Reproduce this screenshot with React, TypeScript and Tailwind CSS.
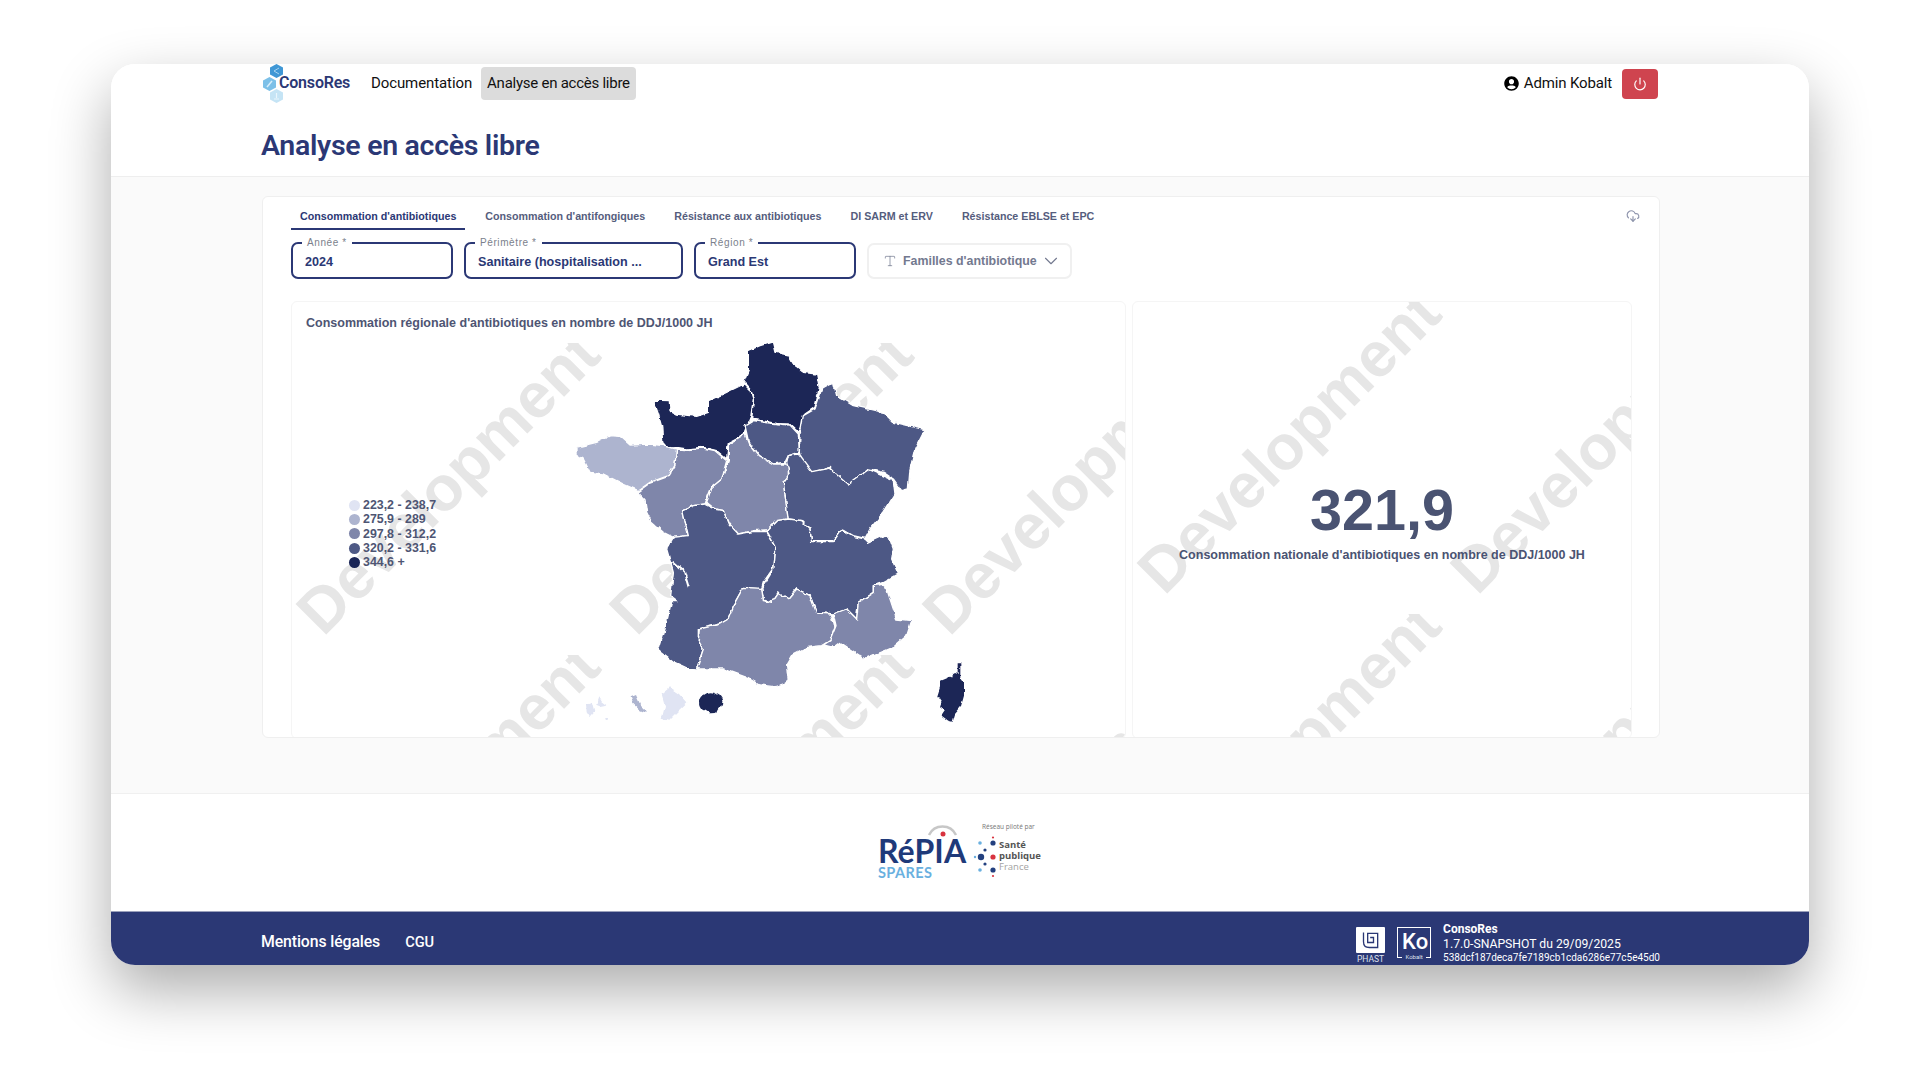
import { ChevronDown, CloudDownload, Power, Type } from "lucide-react";
import { FaUserCircle } from "react-icons/fa";

const SANS = "font-['Liberation_Sans',Arial,sans-serif]";
const UI = "font-['Roboto',sans-serif]";

const C1 = "#e0e4f3";
const C2 = "#adb4cf";
const C3 = "#7f86aa";
const C4 = "#4e5985";
const C5 = "#1a2556";

const REGIONS: { name: string; fill: string; d: string }[] = [
  { name: "hdf", fill: C5, d: "625,95 660,80 700,68 708,100 745,108 760,135 790,160 830,165 838,205 825,265 795,285 785,325 775,340 748,315 715,315 665,305 635,300 640,240 632,210 612,188 625,155" },
  { name: "nor", fill: C5, d: "340,243 388,245 390,275 408,285 470,292 505,280 505,245 550,225 612,195 632,215 640,240 632,295 612,345 565,370 560,420 530,395 490,385 440,390 410,385 385,390 368,370 365,320 355,285" },
  { name: "idf", fill: C4, d: "615,320 640,305 690,312 750,318 775,345 778,400 745,410 735,430 700,435 655,410 625,365" },
  { name: "ges", fill: C4, d: "845,210 880,190 890,230 940,260 1030,280 1060,310 1155,332 1125,390 1110,450 1105,510 1085,515 1060,480 1030,460 985,450 955,490 925,498 895,470 870,445 815,460 785,425 778,400 780,345 790,290 825,270" },
  { name: "cvl", fill: C3, d: "615,345 625,370 655,410 700,435 745,435 745,470 730,490 745,600 710,605 680,632 640,635 595,645 565,610 550,575 525,570 500,550 515,505 545,480 565,425 565,375" },
  { name: "bfc", fill: C4, d: "745,410 775,405 815,458 870,447 925,495 985,452 1060,485 1065,525 1030,580 990,630 975,658 940,650 905,630 880,665 815,665 810,630 785,605 745,600 730,490 748,465 740,430" },
  { name: "bre", fill: C2, d: "108,385 170,370 210,350 240,352 270,378 330,375 370,380 410,390 405,440 385,470 330,490 295,515 250,495 190,465 150,460 130,420 108,405" },
  { name: "pdl", fill: C3, d: "410,390 440,392 490,387 525,395 560,425 545,480 515,505 495,555 460,560 428,575 445,650 400,655 370,640 335,610 320,580 315,545 290,520 330,492 385,472 405,440" },
  { name: "naq", fill: C4, d: "428,575 460,560 495,555 530,572 550,575 565,612 595,645 640,637 680,638 705,680 698,750 670,790 665,810 610,805 585,850 565,900 540,915 475,930 475,965 490,990 470,1050 440,1048 400,1030 355,995 375,930 395,845 412,845 392,830 400,760 380,690 400,655 445,650" },
  { name: "ara", fill: C4, d: "680,635 710,605 745,600 785,605 810,632 815,668 880,668 905,632 940,652 975,660 985,670 1030,650 1045,648 1060,690 1055,720 1075,765 1030,790 1000,800 1000,820 955,850 950,900 920,870 880,885 830,880 810,830 770,810 745,840 715,820 695,850 670,840 665,808 698,755 705,680" },
  { name: "occ", fill: C3, d: "610,805 665,808 670,845 695,850 715,820 745,840 770,810 810,830 830,882 875,885 885,925 870,965 845,980 800,985 760,1005 740,1040 745,1090 705,1103 660,1098 620,1075 550,1050 470,1050 490,990 475,965 478,930 540,915 565,900 585,850" },
  { name: "pac", fill: C3, d: "1000,800 1035,795 1050,840 1070,900 1115,905 1100,950 1060,985 1010,1005 975,1020 930,990 900,970 880,985 850,978 870,965 888,920 880,885 920,870 950,900 955,850 1000,820" },
];

const OUTRE_MER: { fill: string; d: string }[] = [
  { fill: C5, d: "1253,1030 1261,1030 1261,1075 1272,1090 1272,1130 1262,1165 1245,1185 1238,1208 1225,1205 1205,1190 1215,1175 1200,1165 1205,1150 1192,1130 1200,1105 1200,1085 1225,1075 1245,1062 1253,1065" },
  { fill: C1, d: "138,1155 155,1150 163,1180 150,1195 140,1180" },
  { fill: C1, d: "168,1160 178,1132 188,1150 202,1160 180,1165" },
  { fill: C2, d: "272,1135 288,1128 300,1155 318,1172 320,1182 298,1172 280,1155" },
  { fill: C1, d: "365,1125 390,1105 420,1125 442,1150 410,1180 385,1205 365,1200 375,1160" },
];

const LEGEND = [
  { color: C1, label: "223,2 - 238,7" },
  { color: C2, label: "275,9 - 289" },
  { color: C3, label: "297,8 - 312,2" },
  { color: C4, label: "320,2 - 331,6" },
  { color: C5, label: "344,6 +" },
];

const TABS = [
  { label: "Consommation d'antibiotiques", active: true },
  { label: "Consommation d'antifongiques" },
  { label: "Résistance aux antibiotiques" },
  { label: "DI SARM et ERV" },
  { label: "Résistance EBLSE et EPC" },
];

function Watermark() {
  return (
    <div className="absolute inset-0 overflow-hidden grid grid-cols-[repeat(4,313px)] auto-rows-[312px]">
      {Array.from({ length: 12 }).map((_, i) => (
        <div key={i} className="overflow-hidden flex items-center justify-center">
          <span className={`${SANS} -rotate-45 whitespace-nowrap text-[63px] font-bold text-[#e6e6e6] -translate-x-[1px] -translate-y-[17px]`}>
            Development
          </span>
        </div>
      ))}
    </div>
  );
}

function Field({ label, value, width }: { label: string; value: string; width: string }) {
  return (
    <fieldset className={`${width} h-[41px] -mt-[6px] rounded-[7px] border-2 border-[#2b3875] px-[12px] ${SANS}`}>
      <legend className="ml-[-3px] px-[5px] text-[10px] leading-[10px] tracking-[0.6px] text-[#7b7f8c]">{label}</legend>
      <div className="text-[12.6px] font-bold leading-[14px] mt-[7px] text-[#2b3875] whitespace-nowrap">{value}</div>
    </fieldset>
  );
}

function FranceMap() {
  return (
    <svg viewBox="0 0 1320 1260" className="absolute left-[248px] top-[-24px] w-[440px] h-[420px]">
      <defs>
        <filter id="rough" x="-5%" y="-5%" width="110%" height="110%">
          <feTurbulence type="fractalNoise" baseFrequency="0.045" numOctaves={2} seed={4} />
          <feDisplacementMap in="SourceGraphic" scale={14} xChannelSelector="R" yChannelSelector="G" />
        </filter>
      </defs>
      <g filter="url(#rough)">
        {REGIONS.map((r) => (
          <polygon key={r.name} points={r.d} fill={r.fill} stroke="#fff" strokeWidth={4} strokeLinejoin="round" />
        ))}
        <path d="M398 728 L432 758 L446 805" fill="none" stroke="#fff" strokeWidth={6} />
        {OUTRE_MER.map((o, i) => (
          <polygon key={i} points={o.d} fill={o.fill} />
        ))}
        <circle cx={200} cy={1199} r={4} fill={C1} />
        <ellipse cx={512} cy={1150} rx={35} ry={30} fill={C5} />
      </g>
    </svg>
  );
}

function ConsoResLogo() {
  return (
    <div className="relative w-[89px] h-[33px]">
      <svg viewBox="0 0 20 39" className="absolute left-[2px] top-[-3px] w-[20px] h-[39px]">
        <polygon points="13.5,0 20,3.5 20,10.5 13.5,14 7,10.5 7,3.5" fill="#3f97d5" />
        <polygon points="6.5,13 13,16.5 13,23.5 6.5,27 0,23.5 0,16.5" fill="#7cc0e8" />
        <polygon points="13.5,25 20,28.5 20,35.5 13.5,39 7,35.5 7,28.5" fill="#c5e4f5" />
        <path d="M11 7 L16 4 M11 7 L16 10" stroke="#bfe0f5" strokeWidth={0.8} fill="none" />
        <path d="M4 23 L9 17" stroke="#d7eefb" strokeWidth={1.5} fill="none" />
        <path d="M13.5 29 V34 M11 35 H16" stroke="#eaf6fd" strokeWidth={1.2} fill="none" />
      </svg>
      <span className={`${UI} absolute left-[18px] top-[6px] text-[16px] leading-[20px] font-semibold tracking-[-0.2px] text-[#2b3875]`}>ConsoRes</span>
    </div>
  );
}

function RepiaLogo() {
  return (
    <div className="flex items-start">
      <div className="relative w-[96px] h-[58px]">
        <svg viewBox="0 0 96 58" className="absolute inset-0">
          <path d="M51 12 A15 15 0 0 1 78 12" fill="none" stroke="#c7c7c7" strokeWidth={2.5} />
          <circle cx={65} cy={11} r={2.5} fill="#d8333f" />
        </svg>
        <span className="absolute left-0 top-[12px] font-['Lato',sans-serif] font-bold text-[32px] leading-[32px] tracking-[0.1px] text-[#1f3a7a]">RéPIA</span>
        <span className="absolute left-0 top-[42px] font-['Lato',sans-serif] font-bold text-[14.5px] leading-[16px] tracking-[0.4px] text-[#6ab0e0]">SPARES</span>
      </div>
      <div className="relative w-[70px] h-[58px]">
        <span className="absolute left-[8px] top-0 font-['Open_Sans',sans-serif] text-[6.5px] leading-[8px] whitespace-nowrap text-[#777]">Réseau piloté par</span>
        <svg viewBox="0 0 24 42" className="absolute left-[-1px] top-[13px] w-[24px] h-[42px]">
          <circle cx={20} cy={7} r={2.6} fill="#23407f" />
          <circle cx={8} cy={21} r={3.2} fill="#23407f" />
          <circle cx={20} cy={34} r={2.6} fill="#23407f" />
          <circle cx={12} cy={14} r={1.6} fill="#23407f" />
          <circle cx={12} cy={28} r={1.6} fill="#23407f" />
          <circle cx={20} cy={21} r={2.6} fill="#d8333f" />
          <circle cx={20} cy={1.5} r={1.1} fill="#d8333f" />
          <circle cx={20} cy={40} r={1.1} fill="#d8333f" />
          <circle cx={7} cy={7} r={1.8} fill="#6ab0e0" />
          <circle cx={7} cy={34} r={1.8} fill="#6ab0e0" />
          <circle cx={2} cy={21} r={1.2} fill="#6ab0e0" />
        </svg>
        <div className="absolute left-[25px] top-[16px] font-['Open_Sans',sans-serif] text-[9.5px] leading-[11px] font-bold text-[#555]">
          <div>Santé</div>
          <div>publique</div>
          <div className="font-normal text-[#a3a3a3]">France</div>
        </div>
      </div>
    </div>
  );
}

function VendorLogos() {
  return (
    <div className="flex items-start gap-[12px]">
      <div className="flex flex-col items-center w-[29px]">
        <div className="w-[29px] h-[26px] bg-white rounded-[1px] flex items-center justify-center">
          <svg viewBox="0 0 24 24" className="w-[20px] h-[20px]" fill="none" stroke="#2b3875" strokeWidth={1.6}>
            <path d="M3 3 V14 Q3 21 10 21 H20 V4 H8 V15 H15 V9 H11" />
          </svg>
        </div>
        <span className={`${UI} text-[8.5px] leading-[10px] mt-[1px] text-[#dfe2ee]`}>PHAST</span>
      </div>
      <div className="relative w-[34px] h-[31px] border border-white">
        <span className={`${UI} absolute left-[4px] top-[3px] text-[22px] leading-[22px] font-medium text-white`}>Ko</span>
        <span className={`${UI} absolute left-[4px] right-[4px] bottom-[-4px] text-center bg-[#2b3875] text-[6px] leading-[8px] text-[#dfe2ee]`}>Kobalt</span>
      </div>
    </div>
  );
}

export default function App() {
  return (
    <div className="w-[1920px] h-[1080px] bg-white pt-[64px] pl-[111px]">
      <div className={`${UI} w-[1698px] h-[901px] flex flex-col rounded-[24px] overflow-hidden bg-white shadow-[0_25px_60px_0_rgba(0,0,0,0.33)]`}>
        <header className="h-[113px] shrink-0 bg-white border-b border-[#eeeeee] pl-[150px] pr-[151px]">
          <div className="flex items-center h-[36px] pt-[3px]">
            <ConsoResLogo />
            <nav className="flex items-center text-[15px] text-[#111] ml-[20px] gap-[4px]">
              <a className="px-[1px] mr-[4px] tracking-[-0.1px]">Documentation</a>
              <a className="h-[33px] px-[6px] flex items-center rounded-[4px] bg-[#dcdcdc] tracking-[-0.25px]">Analyse en accès libre</a>
            </nav>
            <div className="ml-auto flex items-center gap-[5px] text-[15px] text-[#111]">
              <FaUserCircle className="w-[15px] h-[15px] text-black" />
              <span className="tracking-[-0.15px]">Admin Kobalt</span>
              <button className="ml-[5px] w-[36px] h-[30px] rounded-[4px] bg-[#cf444f] text-white flex items-center justify-center">
                <Power className="w-[14px] h-[14px]" />
              </button>
            </div>
          </div>
          <h1 className="mt-[28px] text-[28.5px] leading-[36px] font-semibold tracking-[-0.3px] text-[#2b3875]">Analyse en accès libre</h1>
        </header>

        <main className="flex-1 bg-[#fafafa] pt-[19px] pl-[151px] pr-[149px]">
          <div className="h-[542px] rounded-[6px] border border-[#efefef] bg-white px-[28px] overflow-hidden">
            <div className={`${SANS} flex items-start h-[33px] pt-[12px] relative`}>
              {TABS.map((t) => (
                <div
                  key={t.label}
                  className={`h-[21px] mr-[11px] px-[9px] text-[10.7px] leading-[14px] font-bold whitespace-nowrap ${t.active ? "text-[#2b3875] border-b-2 border-[#2b3875]" : "text-[#555d7d]"}`}
                >
                  {t.label}
                </div>
              ))}
              <CloudDownload className="absolute right-[-9px] top-[12px] w-[14px] h-[14px] text-[#8f95ad]" />
            </div>
            <div className="flex items-start gap-[11px] mt-[14px] h-[57px]">
              <Field label="Année *" value="2024" width="w-[162px]" />
              <Field label="Périmètre *" value="Sanitaire (hospitalisation ..." width="w-[219px]" />
              <Field label="Région *" value="Grand Est" width="w-[162px]" />
              <div className={`${SANS} w-[205px] h-[36px] -mt-[1px] rounded-[7px] border-2 border-[#f0f0f0] flex items-center pl-[14px] gap-[6px] text-[12.4px] font-bold text-[#73798f] whitespace-nowrap`}>
                <Type className="w-[14px] h-[14px] shrink-0" strokeWidth={1.25} />
                <span>Familles d'antibiotique</span>
                <ChevronDown className="w-[22px] h-[22px] ml-[-3px] shrink-0" strokeWidth={1.2} />
              </div>
            </div>
            <div className={`${SANS} flex gap-[6px]`}>
              <section className="relative w-[835px] shrink-0 h-[438px] rounded-[6px] border border-[#f5f5f5] overflow-hidden">
                <div className="absolute inset-x-0 top-[41px] bottom-0">
                  <Watermark />
                  <FranceMap />
                </div>
                <h2 className="relative px-[14px] pt-[14px] text-[12.5px] leading-[14px] font-bold text-[#4e5573] whitespace-nowrap">
                  Consommation régionale d'antibiotiques en nombre de DDJ/1000 JH
                </h2>
                <ul className="absolute left-[57px] top-[196px] text-[12.4px] leading-[14.3px] font-bold text-[#4e5573]">
                  {LEGEND.map((l) => (
                    <li key={l.label} className="flex items-center gap-[3px] whitespace-nowrap">
                      <span className="w-[11px] h-[11px] rounded-full" style={{ backgroundColor: l.color }} />
                      {l.label}
                    </li>
                  ))}
                </ul>
              </section>
              <section className="relative w-[500px] shrink-0 h-[438px] rounded-[6px] border border-[#f5f5f5] overflow-hidden">
                <Watermark />
                <div className="relative h-full flex flex-col items-center justify-center text-[#4a5372]">
                  <div className="text-[57.5px] leading-[64px] font-bold">321,9</div>
                  <div className="mt-[6px] text-[12.5px] leading-[14px] font-bold whitespace-nowrap">Consommation nationale d'antibiotiques en nombre de DDJ/1000 JH</div>
                </div>
              </section>
            </div>
          </div>
        </main>

        <div className="h-[118px] shrink-0 bg-white border-t border-[#f0f0f0] flex justify-center pt-[29px] pl-[2px]">
          <RepiaLogo />
        </div>

        <footer className="h-[54px] shrink-0 bg-[#2b3875] border-t border-[#9aa0bb] pl-[150px] pr-[149px] flex items-start text-white">
          <a className="mt-[20px] text-[15.8px] leading-[20px] font-medium tracking-[-0.1px]">Mentions légales</a>
          <a className="ml-[25px] mt-[20px] text-[14.6px] leading-[20px] font-medium">CGU</a>
          <div className="ml-auto flex items-start gap-[12px] pt-[15px]">
            <VendorLogos />
            <div className="mt-[-5px] leading-[14.5px] whitespace-nowrap">
              <div className="text-[12px] font-bold">ConsoRes</div>
              <div className="text-[12.2px]">1.7.0-SNAPSHOT du 29/09/2025</div>
              <div className="text-[10px]">538dcf187deca7fe7189cb1cda6286e77c5e45d0</div>
            </div>
          </div>
        </footer>
      </div>
    </div>
  );
}
